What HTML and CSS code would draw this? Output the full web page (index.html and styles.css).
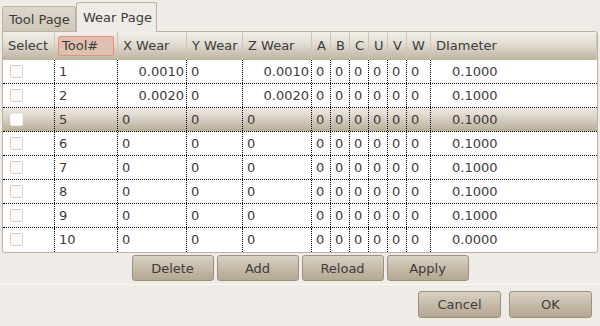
FILE: index.html
```html
<!DOCTYPE html>
<html lang="en">
<head>
  <meta charset="UTF-8">
  <title>Tool Editor</title>
  <link rel="stylesheet" href="styles.css">
</head>
<body>
  <div class="tabs">
    <div class="tab">Tool Page</div>
    <div class="tab active">Wear Page</div>
  </div>
  <div class="frame">
    <div class="row head">
      <div class="cell">Select</div>
      <div class="cell"><span class="focus">Tool#</span></div>
      <div class="cell">X Wear</div>
      <div class="cell">Y Wear</div>
      <div class="cell">Z Wear</div>
      <div class="cell">A</div>
      <div class="cell">B</div>
      <div class="cell">C</div>
      <div class="cell">U</div>
      <div class="cell">V</div>
      <div class="cell">W</div>
      <div class="cell">DIameter</div>
    </div>
    <div id="rows"></div>
  </div>
  <div class="actions">
    <button class="btn">Delete</button>
    <button class="btn">Add</button>
    <button class="btn">Reload</button>
    <button class="btn">Apply</button>
  </div>
  <div class="dialog">
    <button class="btn big">Cancel</button>
    <button class="btn big">OK</button>
  </div>
  <script>
    // tool, x wear, z wear, diameter (right-aligned wear for the first two)
    const tools = [
      { n: 1, x: '0.0010', z: '0.0010', d: '0.1000', right: true },
      { n: 2, x: '0.0020', z: '0.0020', d: '0.1000', right: true },
      { n: 5, x: '0', z: '0', d: '0.1000', sel: true },
      { n: 6, x: '0', z: '0', d: '0.1000' },
      { n: 7, x: '0', z: '0', d: '0.1000' },
      { n: 8, x: '0', z: '0', d: '0.1000' },
      { n: 9, x: '0', z: '0', d: '0.1000' },
      { n: 10, x: '0', z: '0', d: '0.0000' }
    ];

    const rows = document.getElementById('rows');
    tools.forEach(t => {
      const r = document.createElement('div');
      r.className = 'row' + (t.sel ? ' selected' : '');
      const al = t.right ? ' num' : '';
      r.innerHTML = `
        <div class="cell"><span class="check"></span></div>
        <div class="cell">${t.n}</div>
        <div class="cell${al}">${t.x}</div>
        <div class="cell">0</div>
        <div class="cell${al}">${t.z}</div>
        <div class="cell">0</div>
        <div class="cell">0</div>
        <div class="cell">0</div>
        <div class="cell">0</div>
        <div class="cell">0</div>
        <div class="cell">0</div>
        <div class="cell dia">${t.d}</div>
      `;
      rows.appendChild(r);
    });
  </script>
</body>
</html>
```

FILE: styles.css
```css
* {
  box-sizing: border-box;
}
body {
  margin: 0;
  background: #efebe7;
  font-family: "DejaVu Sans", sans-serif;
  font-size: 13px;
  color: #3c3c3c;
}
.tabs {
  display: flex;
  align-items: flex-end;
  height: 31px;
  padding-left: 2px;
}
.tab {
  height: 25px;
  width: 74px;
  padding: 5px 0 0 6px;
  background: linear-gradient(#ded7cb, #cfc6b7);
  border: 1px solid #bcb3a4;
  border-bottom: none;
  border-radius: 3px 3px 0 0;
}
.tab.active {
  height: 30px;
  width: 81px;
  margin-bottom: -1px;
  padding-top: 7px;
  background: #efebe7;
  position: relative;
  z-index: 1;
}
.frame {
  margin: 0 2px;
  height: 222px;
  border: 1px solid #bcb3a4;
  border-radius: 0 3px 3px 3px;
  background: #fff;
  overflow: hidden;
}
.row {
  display: grid;
  grid-template-columns: 52px 63px 69px 56px 69px 19px 19px 19px 19px 19px 24px 1fr;
  height: 24px;
  border-bottom: 1px dotted #000;
}
.row:last-child {
  border-bottom: none;
}
.cell {
  border-right: 1px dotted #000;
  padding: 0 4px;
  line-height: 23px;
  white-space: nowrap;
}
.cell:last-child {
  border-right: none;
}
.cell.num {
  text-align: right;
  padding-right: 2px;
}
.cell.dia {
  padding-left: 21px;
}
.head {
  height: 28px;
  border-bottom: none;
  background: linear-gradient(#f1eee9, #e4ded4 40%, #bdb2a1);
}
.head .cell {
  border-right: 1px solid #cfc6b8;
  line-height: 27px;
  padding-left: 5px;
}
.head .cell:nth-child(2) {
  padding: 4px 4px 0 3px;
}
.focus {
  display: block;
  height: 20px;
  width: 56px;
  line-height: 18px;
  padding-left: 3px;
  background: #dfbfaf;
  border: 1px solid #e78f7a;
  border-radius: 2px;
}
.selected {
  background: linear-gradient(#eeeae4, #d8d0c3 45%, #b9ad99);
}
.check {
  display: inline-block;
  width: 13px;
  height: 13px;
  margin: 5px 0 0 3px;
  vertical-align: top;
  border: 1px solid #d9cfc0;
  border-radius: 2px;
  background: #fdfcfa;
}
.selected .check {
  border-color: #f4f1ec;
  background: #fff;
}
.actions {
  display: flex;
  justify-content: center;
  gap: 3px;
  margin-top: 2px;
  padding-bottom: 3px;
  border-bottom: 1px solid #f8f6f3;
}
.btn {
  width: 82px;
  height: 26px;
  font: inherit;
  color: #3c3c3c;
  background: linear-gradient(#d9d1c4, #c6bba9 50%, #b4a892);
  border: 1px solid #9d917e;
  border-radius: 3px;
  padding: 0;
}
.dialog {
  display: flex;
  justify-content: flex-end;
  gap: 8px;
  padding: 6px 8px 0 0;
}
.btn.big {
  width: 83px;
  height: 27px;
}
```
